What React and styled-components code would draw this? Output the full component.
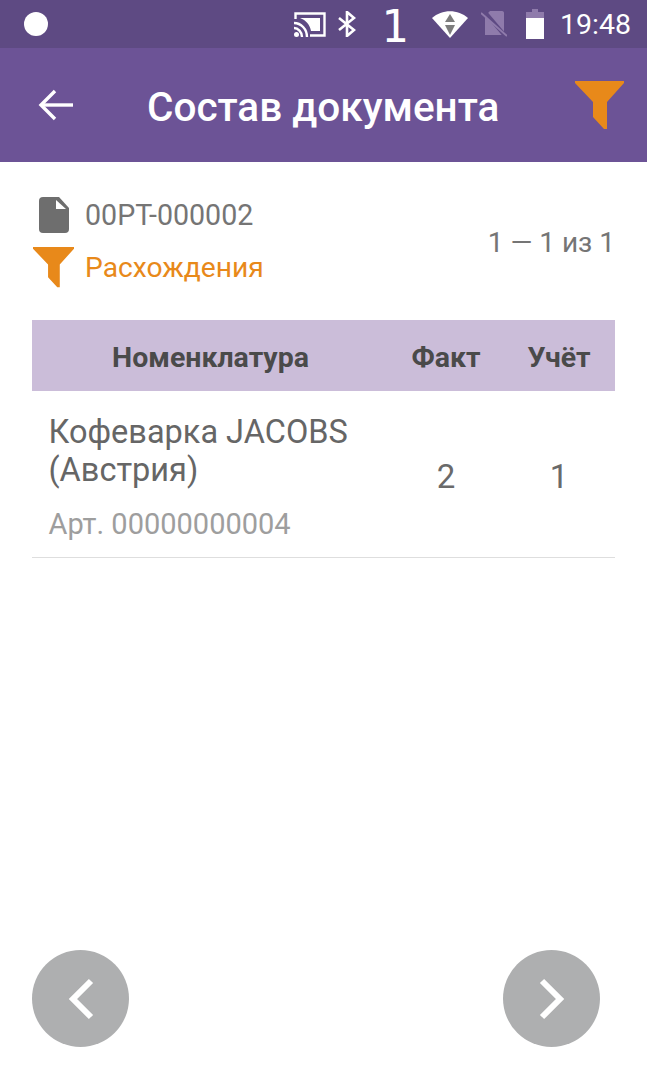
import React from 'react';
import styled, { createGlobalStyle } from 'styled-components';

const GlobalStyle = createGlobalStyle`
  html, body {
    margin: 0;
    padding: 0;
    background: #fff;
    font-family: Roboto, "Liberation Sans", sans-serif;
  }
`;

const Screen = styled.div`
  width: 647px;
  height: 1079px;
  display: flex;
  flex-direction: column;
  overflow: hidden;
  background: #fff;
`;

// Android status bar
const StatusBar = styled.div`
  height: 48px;
  flex: none;
  display: flex;
  align-items: center;
  justify-content: space-between;
  padding: 0 16px 0 24px;
  background: #5e4a83;
  color: #fff;
`;

const Dot = styled.div`
  width: 24px;
  height: 24px;
  border-radius: 50%;
  background: #fff;
`;

const StatusIcons = styled.div`
  display: flex;
  align-items: center;
`;

const StatusGap = styled.span`
  width: ${(p) => p.$w}px;
`;

const SimNumber = styled.span`
  font-family: "DejaVu Sans Mono", monospace;
  font-size: 45px;
  line-height: 42px;
  height: 48px;
  box-sizing: border-box;
  padding-top: 6px;
  margin: 0 24px 0 25px;
`;

const Clock = styled.span`
  font-size: 28.500px;
  line-height: 48px;
  margin: 1px 0 0 16px;
`;

const AppBar = styled.header`
  height: 114px;
  flex: none;
  display: flex;
  align-items: center;
  padding: 0 23px 0 38px;
  background: #6c5396;
`;

const Title = styled.h1`
  flex: 1;
  margin: 3px 0 0 73px;
  font-size: 40.500px;
  font-weight: 500;
  color: #fff;
  white-space: nowrap;
`;

const Content = styled.main`
  flex: 1;
  display: flex;
  flex-direction: column;
  padding: 0 32px 32px;
`;

const DocInfo = styled.div`
  display: flex;
  align-items: center;
  justify-content: space-between;
  box-sizing: border-box;
  height: 158px;
  padding-top: 2px;
`;

const InfoLines = styled.div`
  display: flex;
  flex-direction: column;
  gap: 15px;
  margin-top: -2px;
`;

const InfoLine = styled.div`
  display: flex;
  align-items: center;
  height: 38px;
  gap: 11px;
  font-size: ${(p) => (p.$accent ? '28.200px' : '28.600px')};
  color: ${(p) => (p.$accent ? '#e8891a' : '#757575')};
`;

const IconSlot = styled.div`
  width: 42px;
  display: flex;
  justify-content: center;
`;

const Pager = styled.div`
  font-size: 28px;
  color: #757575;
`;

const Table = styled.div`
  display: flex;
  flex-direction: column;
`;

const Row = styled.div`
  display: grid;
  grid-template-columns: 1fr 114px 112px;
  align-items: center;
`;

const HeadRow = styled(Row)`
  height: 71px;
  box-sizing: border-box;
  padding-top: 3px;
  background: #cbbdd9;
  font-size: 28.500px;
  font-weight: 700;
  color: #4a4a4a;
`;

const HeadCell = styled.div`
  text-align: center;
`;

const BodyRow = styled(Row)`
  height: 167px;
  border-bottom: 1px solid #dedede;
  box-sizing: border-box;
`;

const ItemCell = styled.div`
  padding: 5px 0 0 16.500px;
`;

const ItemName = styled.div`
  font-size: 32.500px;
  line-height: 38px;
  color: #666;
`;

const ItemArt = styled.div`
  margin-top: 18px;
  font-size: 29px;
  line-height: 34px;
  color: #9e9e9e;
`;

const Qty = styled.div`
  font-size: 33px;
  text-align: center;
  padding-top: 4px;
  color: #6a6a6a;
`;

const Spacer = styled.div`
  flex: 1;
`;

const Footer = styled.div`
  display: flex;
  justify-content: space-between;
  padding-right: 15px;
`;

const NavButton = styled.button`
  width: 97px;
  height: 97px;
  padding: 0;
  border: none;
  border-radius: 50%;
  background: #aeafb0;
  display: flex;
  align-items: center;
  justify-content: center;
`;

const Funnel = ({ width }) => (
  <svg width={width} height={width * 0.98} viewBox="0 0 49 48">
    <path d="M0 0H49V2L32 21V48H29L18 36V21L0 2Z" fill="#e8891a" />
  </svg>
);

const CastIcon = () => (
  <svg width="32" height="25" viewBox="0 0 32 25" fill="none" stroke="#fff" strokeWidth="2.400">
    <path d="M1.500 7V1.500H30.500V23.500H16" />
    <path d="M6 6H26V19H17C16 13 12 8 6 6Z" fill="#fff" stroke="none" />
    <path d="M0 11C7 11 13 17 13 25" />
    <path d="M0 16C4 16 8 20 8 25" />
    <circle cx="2.500" cy="22.500" r="2.500" fill="#fff" stroke="none" />
  </svg>
);

const BluetoothIcon = () => (
  <svg width="18" height="26" viewBox="0 0 18 26" fill="none" stroke="#fff" strokeWidth="2.600">
    <path d="M1 7L16 19L9 25V1L16 7L1 19" />
  </svg>
);

const WifiIcon = () => (
  <svg width="36" height="27" viewBox="0 0 36 27">
    <path d="M0 7C10 -2 26 -2 36 7L18 27Z" fill="#fff" />
    <path d="M18 3L23 11H13Z" fill="#7d7d7d" />
    <path d="M18 24L23 14H13Z" fill="#7d7d7d" />
  </svg>
);

const NoSimIcon = () => (
  <svg width="26" height="26" viewBox="0 0 26 26">
    <path d="M9 0H21C22.500 0 23 1 23 2V24H4V5Z" fill="#8f7bab" />
    <path d="M3 0L25 26" stroke="#5e4a83" strokeWidth="4" />
    <path d="M0 2L26 25" stroke="#8f7bab" strokeWidth="2" />
  </svg>
);

const BatteryIcon = () => (
  <svg width="18" height="30" viewBox="0 0 18 30">
    <path d="M6 0H12V3H18V9H0V3H6Z" fill="#8f7bab" />
    <path d="M0 9H18V30H0Z" fill="#fff" />
  </svg>
);

const BackArrow = () => (
  <svg width="36" height="32" viewBox="0 0 36 32" fill="none" stroke="#fff" strokeWidth="3.400">
    <path d="M35 16H3" />
    <path d="M17 2L3 16L17 30" />
  </svg>
);

const DocIcon = () => (
  <svg width="32" height="36" viewBox="-2 0 32 36">
    <path
      d="M4 0H20L30 11V32A4 4 0 0 1 26 36H4A4 4 0 0 1 0 32V4A4 4 0 0 1 4 0Z"
      fill="#6e6e6e"
    />
    <path d="M17 3V12H27Z" fill="#fff" />
  </svg>
);

const Chevron = ({ dir }) => (
  <svg width="28" height="42" viewBox="0 0 28 42" fill="none" stroke="#fff" strokeWidth="6">
    <path d={dir === 'left' ? 'M24 3L6 21L24 39' : 'M4 3L22 21L4 39'} />
  </svg>
);

export default function App() {
  return (
    <>
      <GlobalStyle />
      <Screen>
        <StatusBar>
          <Dot />
          <StatusIcons>
            <CastIcon />
            <StatusGap $w={12} />
            <BluetoothIcon />
            <SimNumber>1</SimNumber>
            <WifiIcon />
            <StatusGap $w={13} />
            <NoSimIcon />
            <StatusGap $w={19} />
            <BatteryIcon />
            <Clock>19:48</Clock>
          </StatusIcons>
        </StatusBar>
        <AppBar>
          <BackArrow />
          <Title>Состав документа</Title>
          <Funnel width={49} />
        </AppBar>
        <Content>
          <DocInfo>
            <InfoLines>
              <InfoLine>
                <IconSlot>
                  <DocIcon />
                </IconSlot>
                00РТ-000002
              </InfoLine>
              <InfoLine $accent>
                <IconSlot>
                  <Funnel width={41} />
                </IconSlot>
                Расхождения
              </InfoLine>
            </InfoLines>
            <Pager>1 — 1 из 1</Pager>
          </DocInfo>
          <Table>
            <HeadRow>
              <HeadCell>Номенклатура</HeadCell>
              <HeadCell>Факт</HeadCell>
              <HeadCell>Учёт</HeadCell>
            </HeadRow>
            <BodyRow>
              <ItemCell>
                <ItemName>
                  Кофеварка JACOBS
                  <br />
                  (Австрия)
                </ItemName>
                <ItemArt>Арт. 00000000004</ItemArt>
              </ItemCell>
              <Qty>2</Qty>
              <Qty>1</Qty>
            </BodyRow>
          </Table>
          <Spacer />
          <Footer>
            <NavButton aria-label="Назад">
              <Chevron dir="left" />
            </NavButton>
            <NavButton aria-label="Вперёд">
              <Chevron dir="right" />
            </NavButton>
          </Footer>
        </Content>
      </Screen>
    </>
  );
}
